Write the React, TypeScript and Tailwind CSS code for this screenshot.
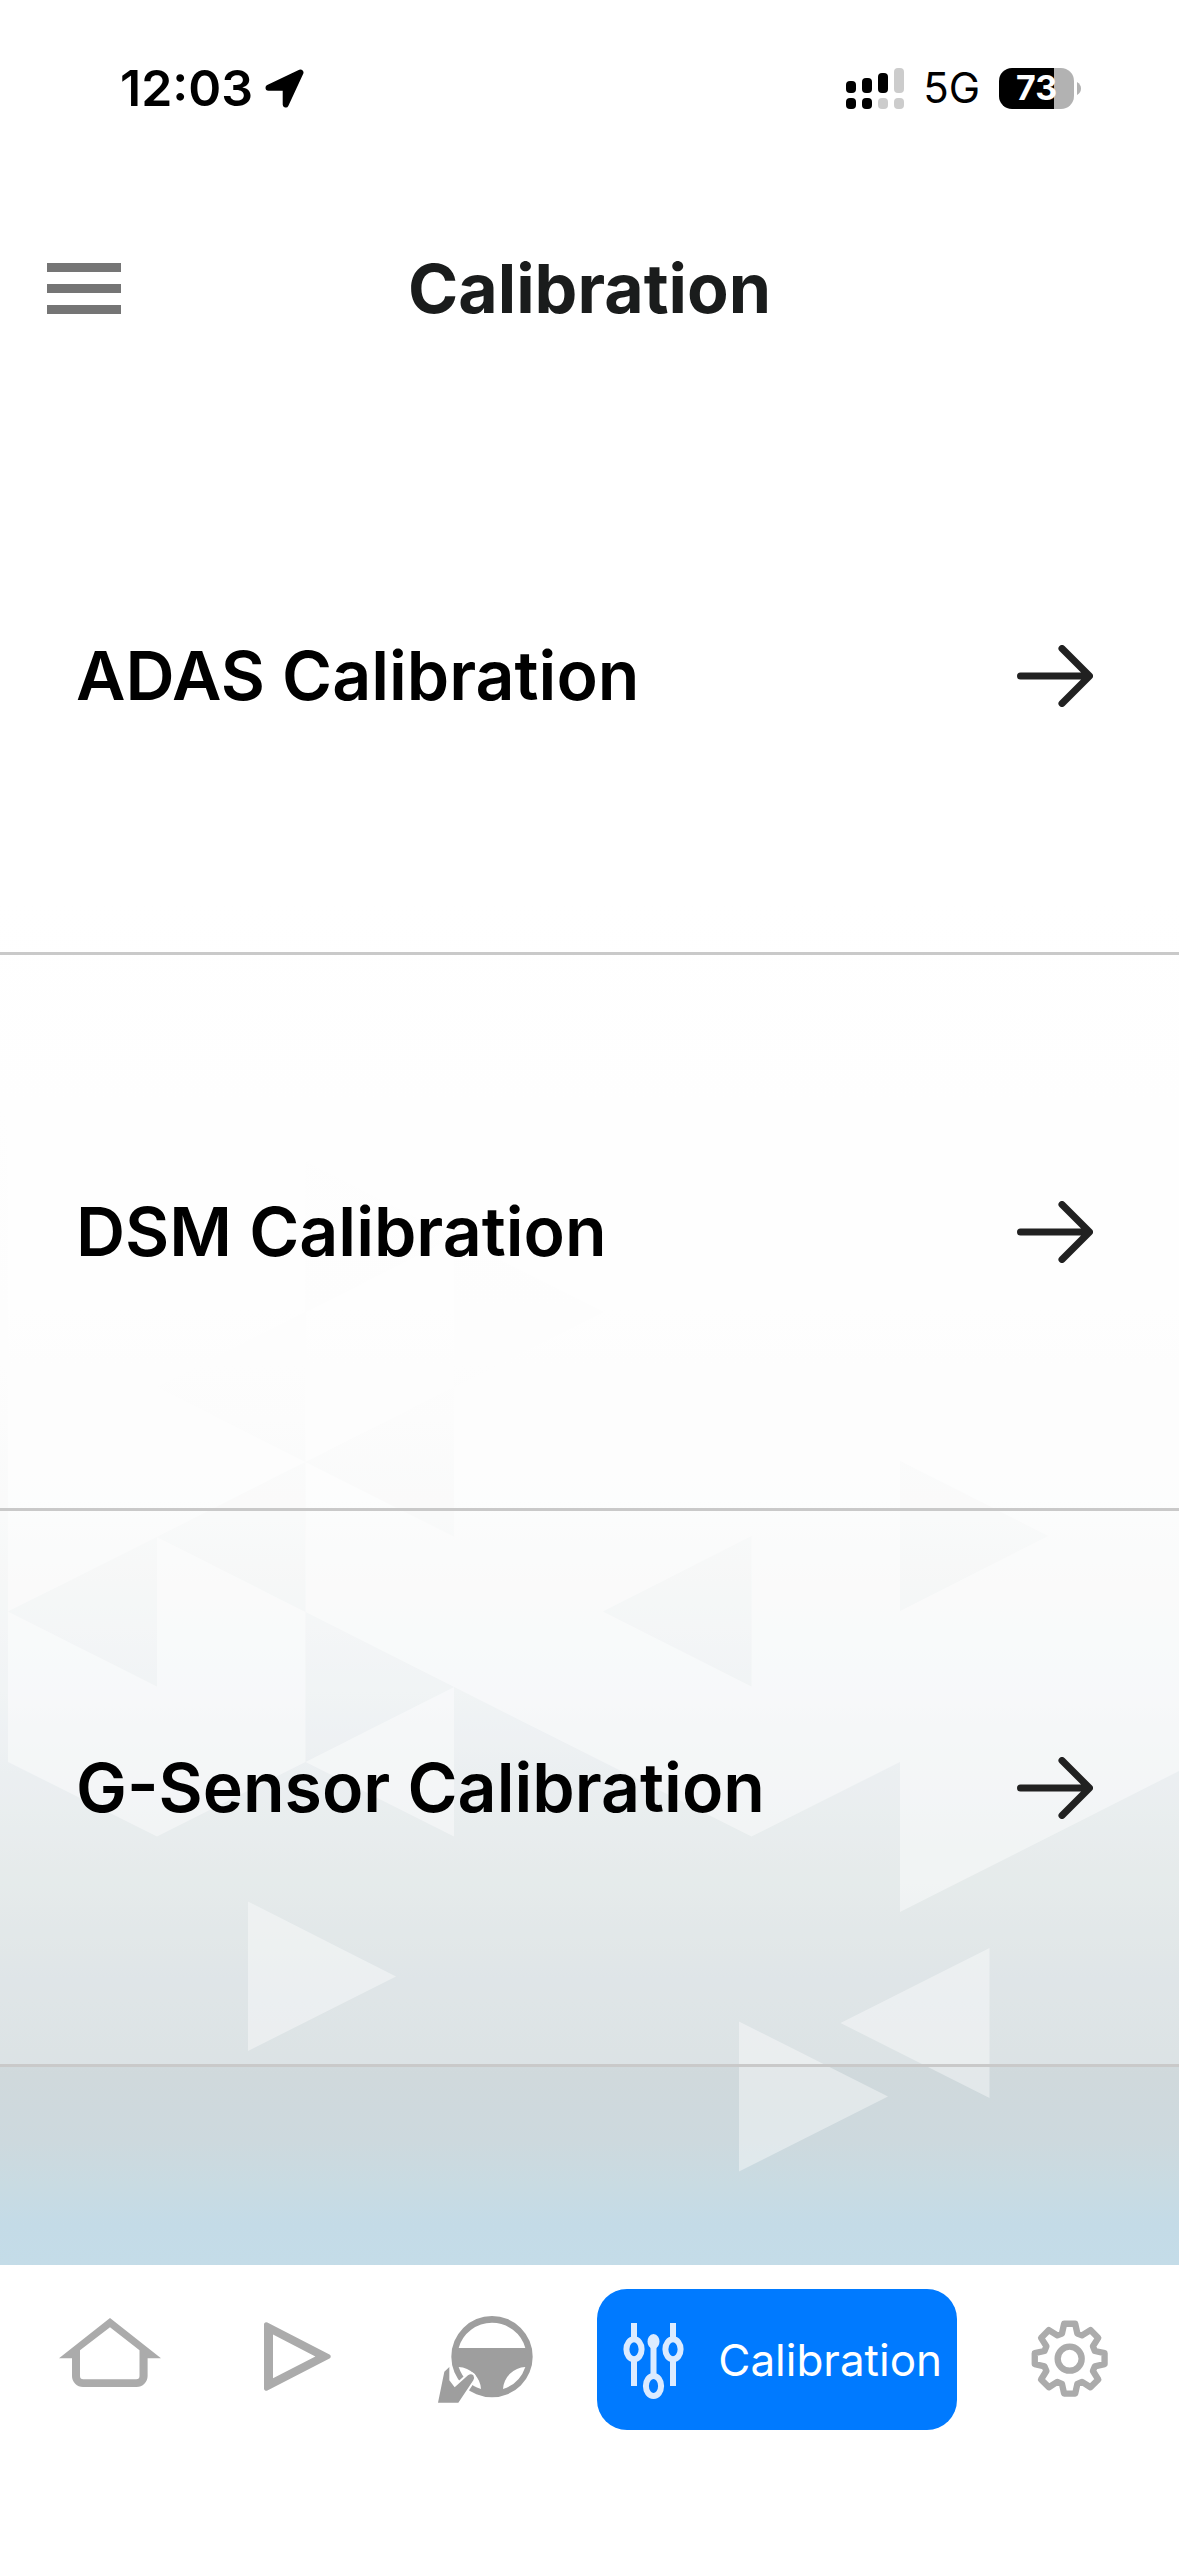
import type { ReactNode } from 'react';

interface NavItem {
  id: string;
  label: string;
  icon: ReactNode;
  active?: boolean;
}

const ROWS = ['ADAS Calibration', 'DSM Calibration', 'G-Sensor Calibration'];

// Eight-toothed outline, four points per tooth
const GEAR_POINTS = Array.from({ length: 8 })
  .flatMap((_, i) =>
    [
      [-17, 79],
      [-9, 106],
      [9, 106],
      [17, 79],
    ].map(([offset, r]) => {
      const a = ((i * 45 + offset) * Math.PI) / 180;
      return `${(154 + r * Math.sin(a)).toFixed(1)},${(146 - r * Math.cos(a)).toFixed(1)}`;
    })
  )
  .join(' ');

function HomeIcon() {
  return (
    <svg width="102" height="87" viewBox="0 0 102 87" fill="#ababab" fillRule="evenodd" aria-hidden="true">
      <path d="M51 2 102 42.3H88.6V60a11 11 0 0 1-11 11H24a11 11 0 0 1-11-11V42.3H0ZM51 11.3 21 34.3V60a3.3 3.3 0 0 0 3.3 3.3H77.2A3.3 3.3 0 0 0 80.5 60V34.3Z" />
    </svg>
  );
}

function PlayIcon() {
  return (
    <svg width="67" height="87" viewBox="0 0 67 87" fill="#ababab" fillRule="evenodd" aria-hidden="true">
      <path d="M0 8.5a2.3 2.3 0 0 1 3.4-2L65.5 38.4a2.4 2.4 0 0 1 0 4.2L3.4 74.5a2.3 2.3 0 0 1-3.4-2ZM9 18.5v43.7L51.4 40.4Z" />
    </svg>
  );
}

function WheelIcon() {
  return (
    <svg width="95" height="87" viewBox="22 18 285 261" aria-hidden="true">
      <path
        fill="#9e9e9e"
        fillRule="evenodd"
        d="M184 18a122 122 0 1 0 0 244a122 122 0 1 0 0-244ZM84 114A104 104 0 0 1 284 114ZM84 171A70 70 0 0 1 151 237A104 104 0 0 1 84 171ZM284 171A70 70 0 0 0 217 237A104 104 0 0 0 284 171Z"
      />
      <path
        fill="#9e9e9e"
        stroke="#fff"
        strokeWidth="12"
        paintOrder="stroke"
        d="M41 185 56 171V211L72 232 112 196Q121 189 128 196 132 202 128 211L83 278H22Z"
      />
    </svg>
  );
}

function SlidersIcon() {
  return (
    <svg width="61" height="87" viewBox="0 0 61 87" fill="none" stroke="#dcebff" strokeWidth="6" aria-hidden="true">
      <path d="M11 7V22M11 45V70M50 7V22M50 45V70M30.500 26V60" />
      <ellipse cx="11" cy="33.300" rx="7.600" ry="10" />
      <ellipse cx="50" cy="33.300" rx="7.600" ry="10" />
      <ellipse cx="30.500" cy="70" rx="7.600" ry="10" />
      <ellipse cx="30.500" cy="25.500" rx="3" ry="4.500" />
    </svg>
  );
}

function GearIcon() {
  return (
    <svg width="77" height="87" viewBox="38 18 231 261" fill="none" stroke="#ababab" strokeWidth="19" aria-hidden="true">
      <polygon points={GEAR_POINTS} strokeLinejoin="round" />
      <circle cx="154" cy="146" r="36" />
    </svg>
  );
}

function ArrowIcon() {
  return (
    <svg
      width="76"
      height="62"
      viewBox="0 0 76 62"
      fill="none"
      stroke="#212121"
      strokeWidth="7"
      strokeLinecap="round"
      strokeLinejoin="round"
      aria-hidden="true"
    >
      <path d="M3.500 31H72M45 3.500 72.500 31 45 58.500" />
    </svg>
  );
}

const NAV: NavItem[] = [
  { id: 'home', label: 'Home', icon: <HomeIcon /> },
  { id: 'play', label: 'Playback', icon: <PlayIcon /> },
  { id: 'driver', label: 'Driver', icon: <WheelIcon /> },
  { id: 'calibration', label: 'Calibration', icon: <SlidersIcon />, active: true },
  { id: 'settings', label: 'Settings', icon: <GearIcon /> },
];

function Backdrop() {
  return (
    <svg
      className="absolute inset-0 h-full w-full"
      viewBox="0 0 1179 2265"
      preserveAspectRatio="xMidYMax slice"
      aria-hidden="true"
    >
      <defs>
        <linearGradient id="sky" gradientUnits="userSpaceOnUse" x1="0" y1="900" x2="0" y2="2265">
          <stop offset="0" stopColor="#ffffff" />
          <stop offset="0.3" stopColor="#fdfdfd" />
          <stop offset="0.38" stopColor="#fbfbfb" />
          <stop offset="0.44" stopColor="#f8f9f9" />
          <stop offset="0.5" stopColor="#f3f5f5" />
          <stop offset="0.58" stopColor="#ecf0f2" />
          <stop offset="0.64" stopColor="#e5eaed" />
          <stop offset="0.72" stopColor="#dde4e4" />
          <stop offset="0.79" stopColor="#d5dde0" />
          <stop offset="0.86" stopColor="#d0d9dc" />
          <stop offset="0.91" stopColor="#cdd9de" />
          <stop offset="0.94" stopColor="#c9dbe2" />
          <stop offset="0.97" stopColor="#c4dbe7" />
          <stop offset="1" stopColor="#c4dce8" />
        </linearGradient>
      </defs>
      <rect width="1179" height="2265" fill="url(#sky)" />
      <g fill="#fff">
        <path
          fillOpacity="0.43"
          fillRule="evenodd"
          d="M8 1000V1762L157 1836.500 305.500 1762V1612L454 1687 751.500 1836.500 900 1762V1912L1197 1762V1000Z
            M8 1611.500 157 1537V1686.500Z
            M157 1537 305.500 1462V1612Z
            M305.500 1462 454 1387V1536.500Z
            M157 1387 305.500 1312V1462Z
            M305.500 1162 454 1237 305.500 1312Z
            M454 1237 603 1312 454 1387Z
            M603 1611.500 751.500 1536V1686.500Z
            M900 1461 1048 1536 900 1611Z"
        />
        <path fillOpacity="0.43" d="M305.500 1762 454 1687V1836.500Z" />
        <path
          fillOpacity="0.4"
          d="M248 1901.500 396 1976.500 248 2051Z M739 2021.500 888 2096.500 739 2171.500Z M989.500 1948V2098L840.500 2023Z"
        />
      </g>
    </svg>
  );
}

function StatusBar() {
  return (
    <div className="flex items-center justify-between pt-[58px] pr-[98px] pb-[59px] pl-[120px] leading-[60px] text-black">
      <div className="flex items-center gap-3">
        <span className="text-[50px] font-semibold">12:03</span>
        <svg width="39" height="39" viewBox="0 0 39 39" aria-hidden="true">
          <path
            d="M35.500 3.500 20.700 35.500V18.700H3.500Z"
            fill="#000"
            stroke="#000"
            strokeWidth="6"
            strokeLinejoin="round"
          />
        </svg>
      </div>
      <div className="flex items-center gap-[19px]">
        <svg width="58" height="41" viewBox="0 0 58 41" aria-hidden="true">
          <rect x="0" y="13" width="10" height="12" rx="4" />
          <rect x="16" y="10" width="10" height="15" rx="4" />
          <rect x="32" y="5" width="10" height="20" rx="4" />
          <rect x="48" y="0" width="10" height="25" rx="4" fill="#cccccc" />
          <rect x="0" y="30" width="10" height="11" rx="4" />
          <rect x="16" y="30" width="10" height="11" rx="4" />
          <rect x="32" y="30" width="10" height="11" rx="4" fill="#cccccc" />
          <rect x="48" y="30" width="10" height="11" rx="4" fill="#cccccc" />
        </svg>
        <span className="text-[42px]">5G</span>
        <div className="flex items-center gap-[3px]">
          <div className="flex h-[41px] w-[75px] items-center justify-center rounded-[13px] bg-[linear-gradient(90deg,#000_73%,#b2b2b2_73%)] text-[34px] font-bold text-white">
            73
          </div>
          <svg width="4" height="13" viewBox="0 0 4 13" aria-hidden="true">
            <path d="M0 0Q4 2.500 4 6.500T0 13Z" fill="#b2b2b2" />
          </svg>
        </div>
      </div>
    </div>
  );
}

export default function App() {
  return (
    <div className="flex min-h-screen flex-col bg-white font-['Inter','Liberation_Sans',sans-serif]">
      <div className="relative flex-1">
        <Backdrop />
        <div className="relative">
          <StatusBar />

          <header className="flex items-center px-[47px] py-[71px]">
            <button type="button" aria-label="Open menu" className="flex w-[74px] flex-col gap-3">
              <span className="h-[9px] bg-[#757575]" />
              <span className="h-[9px] bg-[#757575]" />
              <span className="h-[9px] bg-[#757575]" />
            </button>
            <h1 className="flex-1 pr-[74px] text-center text-[68px] leading-[80px] font-bold text-[#1a1c1c]">
              Calibration
            </h1>
          </header>

          {/* Calibration list */}
          <main>
            {ROWS.map((title) => (
              <button
                key={title}
                type="button"
                className="flex w-full items-center justify-between border-b-[3px] border-[#c9c9c9] bg-white/25 py-[236px] pr-[86px] pl-[76px] text-left text-[68px] leading-[81px] font-semibold text-black"
              >
                <span>{title}</span>
                <ArrowIcon />
              </button>
            ))}
          </main>
        </div>
      </div>

      <nav className="flex items-center bg-white px-4 pt-6 pb-[126px]">
        {NAV.map((item) =>
          item.active ? (
            <button
              key={item.id}
              type="button"
              aria-current="page"
              className="mx-[18px] flex h-[141px] w-[360px] shrink-0 items-center gap-[34px] rounded-[30px] bg-[#007aff] pl-[26px] text-[44px] text-white"
            >
              {item.icon}
              <span>{item.label}</span>
            </button>
          ) : (
            <button key={item.id} type="button" aria-label={item.label} className="flex flex-1 justify-center">
              {item.icon}
            </button>
          )
        )}
      </nav>
    </div>
  );
}
